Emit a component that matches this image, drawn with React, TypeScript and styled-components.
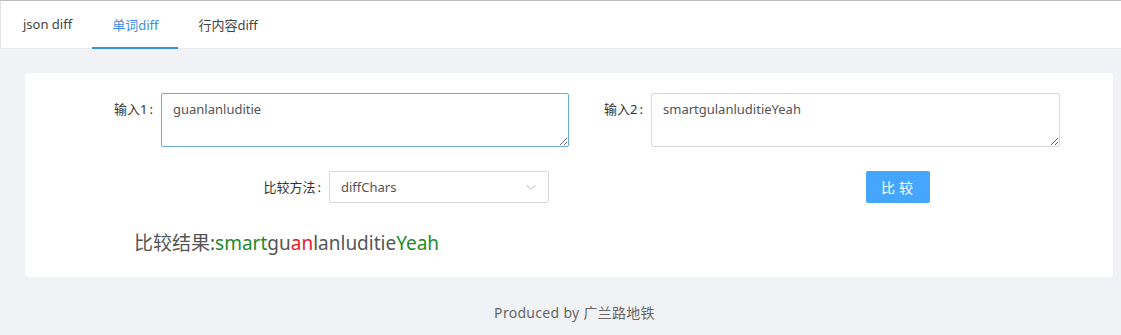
import React from 'react';
import styled, { createGlobalStyle } from 'styled-components';

const GlobalStyle = createGlobalStyle`
  html, body {
    margin: 0;
    padding: 0;
    background: #f0f2f5;
    font-family: "Noto Sans", "Noto Sans CJK SC", sans-serif;
  }
`;

const Page = styled.div`
  min-height: 335px;
  border-top: 1px solid #bdbdbd;
  box-sizing: border-box;
`;

const TabBar = styled.div`
  display: flex;
  height: 48px;
  padding-left: 2px;
  background: #fff;
  border-left: 1px solid #e4e4e4;
  border-bottom: 1px solid #e8eaee;
  box-sizing: border-box;
`;

const Tab = styled.div<{ $active?: boolean }>`
  display: flex;
  align-items: center;
  padding: 0 20px;
  font-size: 13px;
  color: ${(p) => (p.$active ? '#3a8ee6' : '#444')};
  border-bottom: 2px solid ${(p) => (p.$active ? '#3a8ee6' : 'transparent')};
  margin-bottom: -1px;
  cursor: pointer;
`;

const Main = styled.div`
  padding: 24px 8px 0 25px;
`;

const Card = styled.div`
  background: #fff;
  border-radius: 3px;
  height: 204px;
  padding-top: 20px;
  box-sizing: border-box;
`;

const Row = styled.div<{ $gap?: number }>`
  display: flex;
  align-items: flex-start;
  margin-top: ${(p) => p.$gap ?? 0}px;
`;

const Field = styled.div<{ $labelWidth: number; $width?: number }>`
  display: flex;
  align-items: flex-start;
  width: ${(p) => (p.$width ? `${p.$width}px` : 'auto')};

  & > label {
    width: ${(p) => p.$labelWidth}px;
    flex-shrink: 0;
    text-align: right;
    box-sizing: border-box;
    font-size: 13px;
    color: #333;
    line-height: 32px;
  }

  & > label::after {
    content: ':';
    margin: 0 8px 0 2px;
  }
`;

const TextArea = styled.textarea<{ $focused?: boolean }>`
  width: ${(p) => (p.$focused ? 408 : 409)}px;
  height: 54px;
  box-sizing: border-box;
  border: 1px solid ${(p) => (p.$focused ? '#6aaed8' : '#d6d6d6')};
  border-radius: 2px;
  padding: 6px 11px;
  font-family: "Noto Sans", "Noto Sans CJK SC", sans-serif;
  font-size: 13px;
  color: #555;
  outline: none;
  resize: vertical;
`;

const SelectBox = styled.div`
  width: 220px;
  height: 32px;
  box-sizing: border-box;
  border: 1px solid #d9d9d9;
  border-radius: 2px;
  display: flex;
  align-items: center;
  justify-content: space-between;
  padding: 0 11px;
  font-size: 13px;
  color: #555;
`;

const Button = styled.button`
  margin-left: 317px;
  width: 64px;
  height: 32px;
  border: none;
  border-radius: 2px;
  background: #45a6ff;
  color: #fff;
  font-size: 14px;
  letter-spacing: 4px;
  padding-left: 8px;
  font-family: "Noto Sans CJK SC", sans-serif;
  cursor: pointer;
`;

const Result = styled.div`
  margin: 25px 0 0 109px;
  font-size: 19px;
  color: #555;
`;

const Part = styled.span<{ $kind?: 'added' | 'removed' }>`
  color: ${(p) => (p.$kind === 'added' ? '#1f8a2e' : p.$kind === 'removed' ? '#e8182a' : '#555')};
`;

const Footer = styled.div`
  text-align: center;
  font-size: 14px;
  color: #666;
  padding: 25px 0 0 28px;
  letter-spacing: 0.3px;
`;

const parts: { text: string; kind?: 'added' | 'removed' }[] = [
  { text: 'smart', kind: 'added' },
  { text: 'gu' },
  { text: 'an', kind: 'removed' },
  { text: 'lanluditie' },
  { text: 'Yeah', kind: 'added' },
];

const App: React.FC = () => {
  return (
    <Page>
      <GlobalStyle />
      <TabBar>
        <Tab>json diff</Tab>
        <Tab $active>单词diff</Tab>
        <Tab>行内容diff</Tab>
      </TabBar>
      <Main>
        <Card>
          <Row>
            <Field $labelWidth={136} $width={544}>
              <label>输入1</label>
              <TextArea $focused defaultValue="guanlanluditie" />
            </Field>
            <Field $labelWidth={82}>
              <label>输入2</label>
              <TextArea defaultValue="smartgulanluditieYeah" />
            </Field>
          </Row>
          <Row $gap={24}>
            <Field $labelWidth={304}>
              <label>比较方法</label>
              <SelectBox>
                <span>diffChars</span>
                <svg width="12" height="12" viewBox="0 0 12 12">
                  <path d="M1.5 4 L6 8.5 L10.5 4" fill="none" stroke="#bbb" strokeWidth="1" />
                </svg>
              </SelectBox>
            </Field>
            <Button>比较</Button>
          </Row>
          <Result>
            比较结果:
            {parts.map((p, i) => (
              <Part key={i} $kind={p.kind}>
                {p.text}
              </Part>
            ))}
          </Result>
        </Card>
      </Main>
      <Footer>Produced by 广兰路地铁</Footer>
    </Page>
  );
};

export default App;
